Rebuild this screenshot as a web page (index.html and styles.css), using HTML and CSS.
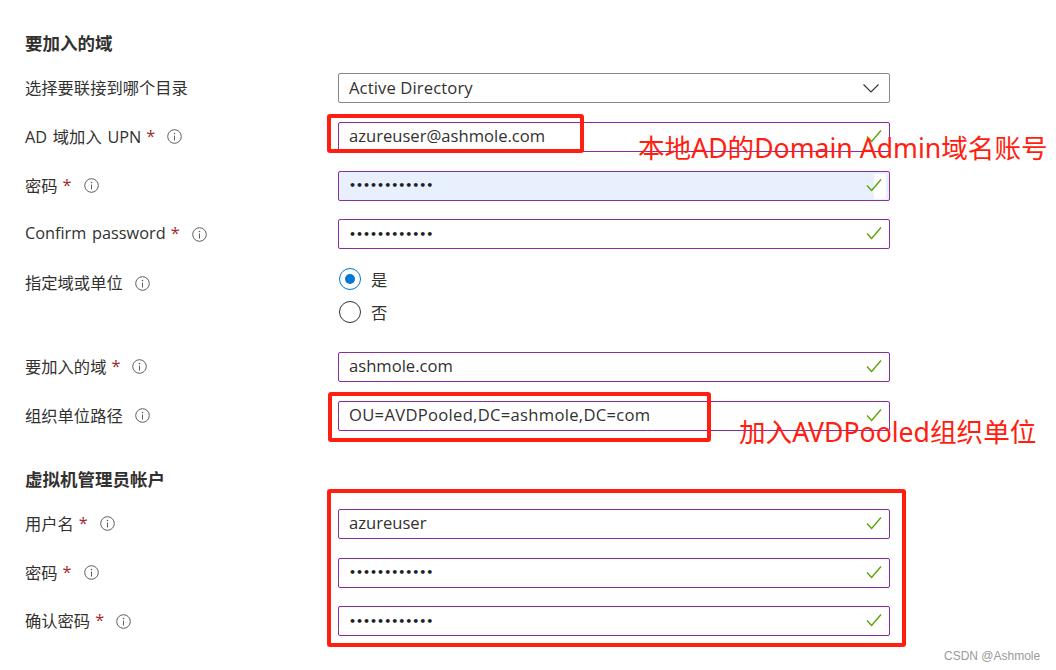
FILE: index.html
```html
<!DOCTYPE html>
<html lang="zh">
<head>
<meta charset="utf-8">
<title>要加入的域</title>
<link rel="stylesheet" href="styles.css">
</head>
<body>
<svg class="defs" width="0" height="0" aria-hidden="true">
  <symbol id="info" viewBox="0 0 15 15">
    <circle cx="7.5" cy="7.5" r="6.8" fill="none" stroke="#605e5c" stroke-width="1"/>
    <circle cx="7.5" cy="4.5" r=".8" fill="#605e5c"/>
    <path d="M7.5 6.5v5" fill="none" stroke="#605e5c" stroke-width="1"/>
  </symbol>
  <symbol id="check" viewBox="0 0 16 14">
    <path d="M1 7.5l4.6 5L15 1.5" fill="none" stroke="#57a300" stroke-width="1.3"/>
  </symbol>
</svg>
<main class="page">
  <h2 class="heading">要加入的域</h2>
  <div class="rows">
    <div class="row"><div class="label">选择要联接到哪个目录</div>
      <div class="field select">Active Directory<svg class="chevron" viewBox="0 0 16 9"><path d="M.5.5L8 8 15.5.5" fill="none" stroke="#323130" stroke-width="1.1"/></svg></div></div>
    <div class="row"><div class="label">AD 域加入 UPN<span class="req">*</span><svg class="info"><use href="#info"/></svg></div>
      <div class="field">azureuser@ashmole.com<svg class="check"><use href="#check"/></svg></div></div>
    <div class="row"><div class="label">密码<span class="req">*</span><svg class="info"><use href="#info"/></svg></div>
      <div class="field autofill"><span class="dots">••••••••••••</span><span class="patch"></span><svg class="check"><use href="#check"/></svg></div></div>
    <div class="row"><div class="label">Confirm password<span class="req">*</span><svg class="info"><use href="#info"/></svg></div>
      <div class="field"><span class="dots">••••••••••••</span><svg class="check"><use href="#check"/></svg></div></div>
    <div class="row radio-row"><div class="label">指定域或单位<svg class="info"><use href="#info"/></svg></div>
      <div class="radios">
        <div class="radio"><span class="circle on"><span class="dot"></span></span>是</div>
        <div class="radio"><span class="circle"></span>否</div>
      </div></div>
    <div class="row"><div class="label">要加入的域<span class="req">*</span><svg class="info"><use href="#info"/></svg></div>
      <div class="field">ashmole.com<svg class="check"><use href="#check"/></svg></div></div>
    <div class="row"><div class="label">组织单位路径<svg class="info"><use href="#info"/></svg></div>
      <div class="field caps">OU=AVDPooled,DC=ashmole,DC=com<svg class="check"><use href="#check"/></svg></div></div>
  </div>
  <h2 class="heading second">虚拟机管理员帐户</h2>
  <div class="rows">
    <div class="row"><div class="label">用户名<span class="req">*</span><svg class="info"><use href="#info"/></svg></div>
      <div class="field">azureuser<svg class="check"><use href="#check"/></svg></div></div>
    <div class="row"><div class="label">密码<span class="req">*</span><svg class="info"><use href="#info"/></svg></div>
      <div class="field"><span class="dots">••••••••••••</span><svg class="check"><use href="#check"/></svg></div></div>
    <div class="row"><div class="label">确认密码<span class="req">*</span><svg class="info"><use href="#info"/></svg></div>
      <div class="field"><span class="dots">••••••••••••</span><svg class="check"><use href="#check"/></svg></div></div>
  </div>
</main>
<div class="mark box-upn"></div>
<div class="mark box-ou"></div>
<div class="mark box-admin"></div>
<div class="note note-upn">本地AD的Domain Admin域名账号</div>
<div class="note note-ou">加入AVDPooled组织单位</div>
<div class="watermark">CSDN @Ashmole</div>
</body>
</html>
```
FILE: styles.css
```css
* { box-sizing: border-box; }
html, body { margin: 0; padding: 0; background: #fff; }
body {
  width: 1056px;
  height: 670px;
  position: relative;
  overflow: hidden;
  color: #323130;
  font-family: "Open Sans", "Noto Sans CJK SC", sans-serif;
  font-size: 16.3px;
}
.defs { position: absolute; }
.page { padding: 32px 0 0 25px; }
.heading {
  margin: 0;
  height: 24px;
  line-height: 22px;
  font-size: 17.5px;
  font-weight: 700;
}
.heading.second { margin-top: 37px; margin-bottom: 17px; }
.page > .heading:first-child { margin-bottom: 17px; }
.rows { display: flex; flex-direction: column; gap: 18.8px; }
.row {
  display: grid;
  grid-template-columns: 313px 552px;
  height: 30px;
}
.radio-row { height: 65px; }
.label {
  display: flex;
  align-items: center;
  height: 30px;
  padding-bottom: 2px;
  white-space: pre;
  word-spacing: 1.5px;
}
.req { color: #a4262c; margin-left: 5px; }
.info { width: 15px; height: 15px; margin: 2px 0 0 12px; flex: none; }
.field {
  position: relative;
  display: flex;
  align-items: center;
  height: 30px;
  padding: 0 10px 2px;
  border: 1px solid #8a2da5;
  border-radius: 2px;
  font-size: 16.6px;
  white-space: nowrap;
}
.select { border-color: #8a8886; letter-spacing: 0.13px; }
.caps { letter-spacing: 0.3px; }
.autofill { background: #e8f0fe; }
.patch {
  position: absolute;
  right: 3px;
  top: 2px;
  width: 12px;
  height: 25px;
  background: #fff;
}
.dots {
  font-family: "DejaVu Sans", sans-serif;
  font-size: 11px;
  font-weight: 700;
  color: #201f1e;
  padding-top: 2px;
}
.chevron { position: absolute; right: 10px; top: 10px; width: 16px; height: 9px; }
.check { position: absolute; right: 7px; top: 6px; width: 16px; height: 14px; }
.radios { display: flex; flex-direction: column; gap: 11px; }
.radio { display: flex; align-items: center; height: 22px; gap: 10px; }
.circle {
  display: flex;
  align-items: center;
  justify-content: center;
  width: 22px;
  height: 22px;
  margin-left: 1px;
  border: 1px solid #323130;
  border-radius: 50%;
}
.circle.on { border-color: #0078d4; }
.dot { width: 10px; height: 10px; border-radius: 50%; background: #0078d4; }
.mark {
  position: absolute;
  border: 4px solid #ff1e10;
  border-radius: 3px;
}
.box-upn { left: 327px; top: 114px; width: 257px; height: 39px; }
.box-ou { left: 328px; top: 392px; width: 383px; height: 50px; }
.box-admin { left: 327px; top: 489px; width: 579px; height: 158px; }
.note {
  position: absolute;
  color: #ff1e10;
  font-family: "Noto Sans", "Noto Sans CJK SC", sans-serif;
  white-space: nowrap;
  line-height: 40px;
}
.note-upn { left: 638px; top: 128px; font-size: 26.6px; }
.note-ou { left: 739px; top: 412px; font-size: 26.6px; }
.watermark {
  position: absolute;
  left: 944px;
  top: 648px;
  color: #9a9a9a;
  font-family: "Liberation Sans", sans-serif;
  font-size: 12px;
  line-height: 16px;
  white-space: nowrap;
}
```
